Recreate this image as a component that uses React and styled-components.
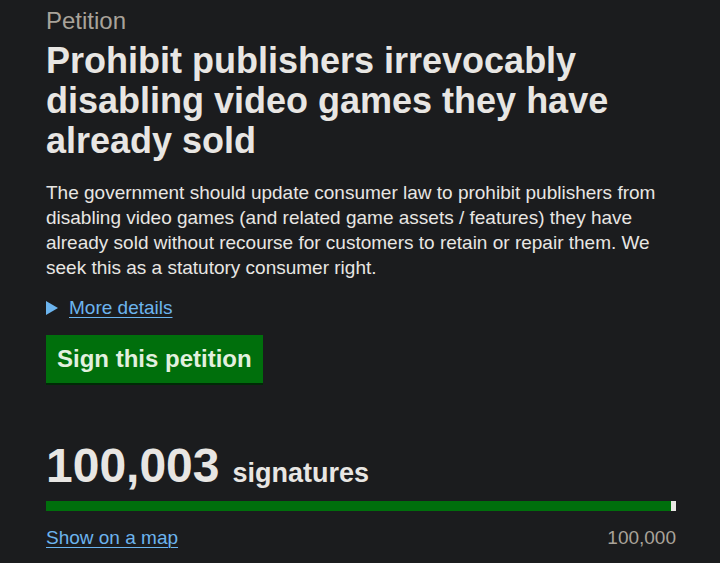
import React from 'react';
import styled, { createGlobalStyle } from 'styled-components';

const GlobalStyle = createGlobalStyle`
  html, body {
    margin: 0;
    padding: 0;
    background-color: #1b1c1e;
  }
  body {
    font-family: "Liberation Sans", Arial, sans-serif;
    color: #e8e6e3;
  }
`;

const Page = styled.main`
  padding: 6px 44px 0 46px;
  max-width: 630px;
`;

const Caption = styled.span`
  display: block;
  font-size: 24px;
  line-height: 30px;
  color: #a9a39a;
`;

const Heading = styled.h1`
  font-size: 36px;
  font-weight: 700;
  line-height: 40px;
  margin: 5px 0 19px 0;
`;

const Summary = styled.p`
  font-size: 19px;
  line-height: 25px;
  margin: 0 0 15px 0;
`;

const Details = styled.div`
  display: flex;
  align-items: center;
  gap: 11px;
  font-size: 19px;
  line-height: 25px;
  margin-bottom: 15px;
`;

const Arrow = styled.span`
  width: 0;
  height: 0;
  border-style: solid;
  border-width: 7px 0 7px 12px;
  border-color: transparent transparent transparent #6cb4ee;
`;

const Link = styled.a`
  color: #6cb4ee;
  text-decoration: underline;
  text-underline-offset: 3px;
  text-decoration-thickness: 1px;
  font-size: 19px;
`;

const SignButton = styled.button`
  display: inline-block;
  font-family: inherit;
  font-size: 24px;
  font-weight: 700;
  line-height: 26px;
  color: #e2f0df;
  background-color: #006f0c;
  border: none;
  border-radius: 0;
  padding: 11px 11px;
  box-shadow: 0 2px 0 #002a06;
  cursor: pointer;
`;

const Count = styled.div`
  display: flex;
  align-items: baseline;
  gap: 13px;
  margin-top: 55px;
`;

const CountNumber = styled.span`
  font-size: 48px;
  font-weight: 700;
  line-height: 56px;
`;

const CountLabel = styled.span`
  font-size: 27px;
  font-weight: 700;
`;

const Progress = styled.div`
  height: 10px;
  background-color: #e8e6e3;
  margin-top: 7px;
`;

const ProgressFill = styled.div`
  height: 100%;
  background-color: #006f0c;
`;

const Footer = styled.div`
  display: flex;
  justify-content: space-between;
  align-items: baseline;
  margin-top: 16px;
  font-size: 19px;
`;

const Target = styled.span`
  color: #a9a39a;
`;

const App = () => {
  const signatures = 100003;
  const target = 100000;
  const percent = Math.min(100, (signatures / (target * 1.008)) * 100);

  return (
    <>
      <GlobalStyle />
      <Page>
        <Caption>Petition</Caption>
        <Heading>Prohibit publishers irrevocably disabling video games they have already sold</Heading>
        <Summary>
          The government should update consumer law to prohibit publishers from disabling video
          games (and related game assets / features) they have already sold without recourse for
          customers to retain or repair them. We seek this as a statutory consumer right.
        </Summary>
        <Details>
          <Arrow />
          <Link href="#">More details</Link>
        </Details>
        <SignButton>Sign this petition</SignButton>
        <Count>
          <CountNumber>{signatures.toLocaleString('en-GB')}</CountNumber>
          <CountLabel>signatures</CountLabel>
        </Count>
        <Progress>
          <ProgressFill style={{ width: `${percent}%` }} />
        </Progress>
        <Footer>
          <Link href="#">Show on a map</Link>
          <Target>{target.toLocaleString('en-GB')}</Target>
        </Footer>
      </Page>
    </>
  );
};

export default App;
